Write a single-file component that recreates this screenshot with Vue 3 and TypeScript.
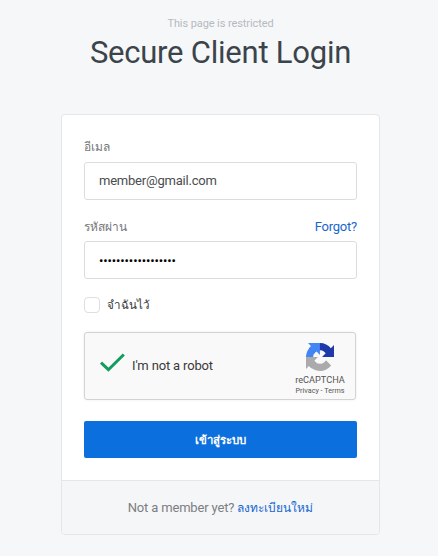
<script setup lang="ts">
import { ref } from 'vue'

const email = ref<string>('member@gmail.com')
const password = ref<string>('memberpassword1234')
const remember = ref<boolean>(false)
</script>

<template>
  <main class="page">
    <header class="heading">
      <p class="note">This page is restricted</p>
      <h1>Secure Client Login</h1>
    </header>

    <form class="card" @submit.prevent>
      <div class="body">
        <label class="label" for="email"><span class="thai">อีเมล</span></label>
        <input id="email" v-model="email" class="field" type="text" />

        <div class="label second">
          <label class="thai" for="password">รหัสผ่าน</label>
          <a class="link forgot">Forgot?</a>
        </div>
        <input id="password" v-model="password" class="field secret" type="password" />

        <label class="remember">
          <input v-model="remember" class="box" type="checkbox" />
          <span class="thai tight">จำฉันไว้</span>
        </label>

        <div class="captcha">
          <svg class="check" viewBox="0 0 26 20"><path d="M1.5 9.7 8.9 16.7 24.3 1.5" /></svg>
          <span class="robot">I'm not a robot</span>
          <div class="brand">
            <svg class="logo" viewBox="0 0 64 64">
              <path fill="#1c3aa9" d="M64 31.955l-.033-1.37V4.687l-7.16 7.16C50.948 4.674 42.033.093 32.05.093c-10.4 0-19.622 4.96-25.458 12.64l11.736 11.86a15.55 15.55 0 0 1 4.754-5.334c2.05-1.6 4.952-2.906 8.968-2.906.485 0 .86.057 1.135.163 4.976.393 9.288 3.14 11.828 7.124l-8.307 8.307L64 31.953" />
              <path fill="#4285f4" d="M31.862.094l-1.37.033H4.594l7.16 7.16C4.58 13.147 0 22.06 0 32.046c0 10.4 4.96 19.622 12.64 25.458L24.5 45.768a15.55 15.55 0 0 1-5.334-4.754c-1.6-2.05-2.906-4.952-2.906-8.968 0-.485.057-.86.163-1.135.393-4.976 3.14-9.288 7.124-11.828l8.307 8.307L31.86.095" />
              <path fill="#ababab" d="M.001 32.045l.033 1.37v25.898l7.16-7.16c5.86 7.173 14.774 11.754 24.76 11.754 10.4 0 19.622-4.96 25.458-12.64l-11.736-11.86a15.55 15.55 0 0 1-4.754 5.334c-2.05 1.6-4.952 2.906-8.968 2.906-.485 0-.86-.057-1.135-.163-4.976-.393-9.288-3.14-11.828-7.124l8.307-8.307c-10.522.04-22.4.066-27.295-.005" />
            </svg>
            <span class="name">reCAPTCHA</span>
            <span class="terms">Privacy - Terms</span>
          </div>
        </div>

        <button class="submit" type="submit"><span class="thai">เข้าสู่ระบบ</span></button>
      </div>
      <footer class="foot"><span class="ask">Not a member yet?&nbsp;</span><a class="link thai">ลงทะเบียนใหม่</a></footer>
    </form>
  </main>
</template>

<style>
body {
  background: #f5f7f9;
}
</style>

<style scoped>
.page {
  box-sizing: border-box;
  height: 556px;
  padding: 16px 0 0 61px;
  background: #f5f7f9;
  font-family: Roboto, "Noto Sans", sans-serif;
  font-size: 13px;
  color: #343a40;
}
.heading {
  width: 319px;
  height: 98px;
  text-align: center;
}
.note {
  margin: 0;
  font-size: 11px;
  line-height: 15px;
  letter-spacing: -0.09px;
  color: #b5babf;
}
h1 {
  margin: 2px 0 0;
  font-size: 31px;
  font-weight: 400;
  line-height: 40px;
  letter-spacing: -0.23px;
  color: #3c444b;
  white-space: nowrap;
}
.card {
  box-sizing: border-box;
  width: 319px;
  height: 421px;
  display: flex;
  flex-direction: column;
  border: 1px solid #e3e6ea;
  border-radius: 4px;
  background: #fff;
  overflow: hidden;
}
.body {
  box-sizing: border-box;
  height: 365px;
  padding: 21px 22px 0;
}
.label {
  display: flex;
  justify-content: space-between;
  align-items: center;
  height: 20px;
  margin-bottom: 6px;
  color: #75777b;
}
.second {
  margin-top: 16px;
  margin-bottom: 5px;
}
.link {
  color: #1766cf;
}
.forgot {
  letter-spacing: -0.22px;
}
.thai {
  font-size: 12px;
  white-space: nowrap;
}
.tight {
  font-size: 11.6px;
}
.field {
  box-sizing: border-box;
  display: block;
  width: 273px;
  height: 38px;
  margin: 0;
  padding: 0 14px 2px;
  border: 1px solid #dadcdf;
  border-radius: 3px;
  outline: none;
  background: #fff;
  font: inherit;
  letter-spacing: -0.22px;
  color: #4a4c4e;
}
.secret {
  padding-bottom: 0;
  letter-spacing: -0.12px;
  color: #000;
}
.remember {
  display: flex;
  align-items: center;
  gap: 7px;
  height: 16px;
  margin-top: 18px;
  color: #343638;
}
.box {
  appearance: none;
  box-sizing: border-box;
  width: 16px;
  height: 16px;
  margin: 0;
  border: 1px solid #dcdfe3;
  border-radius: 4px;
  background: #fff;
}
.captcha {
  box-sizing: border-box;
  display: flex;
  align-items: center;
  width: 272px;
  height: 68px;
  margin-top: 19px;
  padding: 0 10px 0 14px;
  border: 1px solid #d3d3d3;
  border-radius: 3px;
  background: #f9f9f9;
  box-shadow: 0 0 3px rgba(0, 0, 0, 0.08);
}
.check {
  width: 27px;
  height: 20px;
  margin-top: -6px;
  fill: none;
  stroke: #149b5f;
  stroke-width: 3;
}
.robot {
  flex: 1;
  margin: -2px 0 0 6px;
  font-size: 13px;
  letter-spacing: -0.16px;
  color: #3a3a3a;
  white-space: nowrap;
}
.brand {
  display: flex;
  flex-direction: column;
  align-items: center;
  width: 50px;
  padding-top: 6px;
  color: #555;
}
.logo {
  width: 28px;
  height: 28px;
}
.name {
  margin-top: 3px;
  font-size: 9.2px;
  line-height: 12px;
}
.terms {
  font-size: 7.2px;
  line-height: 9px;
  white-space: nowrap;
}
.submit {
  display: block;
  width: 273px;
  height: 37px;
  margin: 21px 0 0;
  padding: 0;
  border: 0;
  border-radius: 2px;
  background: #0c6fde;
  font: inherit;
  font-weight: 600;
  color: #fff;
}
.submit .thai {
  font-size: 11.4px;
}
.foot {
  flex: 1;
  display: flex;
  justify-content: center;
  align-items: center;
  border-top: 1px solid #e3e6ea;
  background: #f5f6f8;
  color: #7b7e83;
}
.ask {
  letter-spacing: -0.17px;
}
</style>
